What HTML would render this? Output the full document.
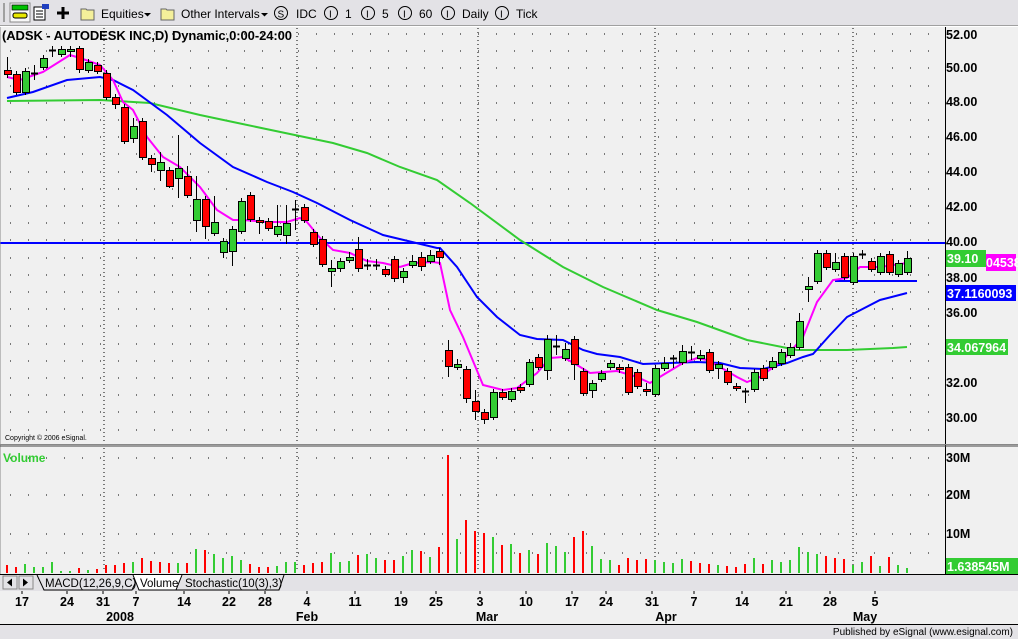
<!DOCTYPE html>
<html><head><meta charset="utf-8"><style>
body{margin:0;width:1018px;height:639px;overflow:hidden;background:#f0f0f0;font-family:"Liberation Sans",sans-serif;}
svg{position:absolute;left:0;top:0}
</style></head><body>
<svg id="s" width="1018" height="639" xmlns="http://www.w3.org/2000/svg" font-family="Liberation Sans, sans-serif">
<rect x="0" y="0" width="1018" height="26" fill="#e3e2e6"/>
<line x1="0" y1="25.5" x2="1018" y2="25.5" stroke="#a0a0a0"/>
<line x1="0" y1="26.5" x2="1018" y2="26.5" stroke="#fff"/>
<rect x="3" y="3" width="2" height="19" fill="#a0a0a0"/>
<rect x="10" y="3" width="20" height="19" fill="#f8f8f8" stroke="#888"/>
<rect x="12" y="5" width="16" height="5" fill="#00c000" stroke="#000" stroke-width=".7"/>
<rect x="13" y="13" width="14" height="5" rx="2" fill="#e8e800" stroke="#000"/>
<rect x="34" y="7" width="11" height="13" fill="#fff" stroke="#000"/>
<rect x="42" y="4" width="7" height="5" fill="#2040c0"/>
<line x1="36" y1="11" x2="43" y2="11" stroke="#000"/><line x1="36" y1="14" x2="43" y2="14" stroke="#000"/><line x1="36" y1="17" x2="43" y2="17" stroke="#000"/>
<path d="M63 7v12M57 13h12" stroke="#000" stroke-width="3"/>
<g font-size="12" fill="#000">
<path d="M81 9h5l1 1h7v10h-13z" fill="#f4f09a" stroke="#666"/>
<text x="101" y="18">Equities</text><path d="M144 13h7l-3.5 3.5z"/>
<path d="M161 9h5l1 1h7v10h-13z" fill="#f4f09a" stroke="#666"/>
<text x="181" y="18">Other Intervals</text><path d="M261 13h7l-3.5 3.5z"/>
<circle cx="281" cy="13" r="6.5" fill="none" stroke="#000"/><text x="277.5" y="17.5" font-size="10">S</text><text x="296" y="18">IDC</text>
<circle cx="331" cy="13" r="6.5" fill="none" stroke="#000"/><text x="329" y="17.5" font-size="10">I</text><text x="345" y="18">1</text>
<circle cx="368" cy="13" r="6.5" fill="none" stroke="#000"/><text x="366" y="17.5" font-size="10">I</text><text x="382" y="18">5</text>
<circle cx="405" cy="13" r="6.5" fill="none" stroke="#000"/><text x="403" y="17.5" font-size="10">I</text><text x="419" y="18">60</text>
<circle cx="448" cy="13" r="6.5" fill="none" stroke="#000"/><text x="446" y="17.5" font-size="10">I</text><text x="462" y="18">Daily</text>
<circle cx="502" cy="13" r="6.5" fill="none" stroke="#000"/><text x="500" y="17.5" font-size="10">I</text><text x="516" y="18">Tick</text>
</g>
<g id="grid"></g>
<g id="ma" fill="none" stroke-width="2"></g>
<g id="c"></g>
<g id="v"></g>
<line x1="0" y1="27" x2="0" y2="591" stroke="#888"/>
<line x1="945.5" y1="27" x2="945.5" y2="591" stroke="#000"/>
<line x1="0" y1="444.5" x2="1018" y2="444.5" stroke="#888"/>
<line x1="0" y1="446" x2="1018" y2="446" stroke="#444"/>
<text x="2" y="40" font-size="13" font-weight="bold" textLength="290">(ADSK - AUTODESK INC,D) Dynamic,0:00-24:00</text>
<text x="5" y="440" font-size="7">Copyright © 2006 eSignal.</text>
<text x="3" y="462" font-size="12" font-weight="bold" fill="#33cc33">Volume</text>
<g font-size="12.5" font-weight="bold" id="ax"></g>
<rect x="946" y="250" width="40" height="17" fill="#33cc33"/>
<rect x="986" y="254" width="30" height="17" fill="#ff00ff"/>
<text x="986" y="267" font-size="12.5" font-weight="bold" fill="#fff">04538</text>
<text x="947" y="263" font-size="12.5" font-weight="bold" fill="#fff">39.10</text>
<rect x="946" y="285" width="70" height="16" fill="#0000ff"/>
<text x="947" y="298" font-size="12.5" font-weight="bold" fill="#fff">37.1160093</text>
<rect x="946" y="339" width="62" height="16" fill="#33cc33"/>
<text x="947" y="352" font-size="12.5" font-weight="bold" fill="#fff">34.067964</text>
<rect x="946" y="558" width="72" height="16" fill="#33cc33"/>
<text x="947" y="571" font-size="12.5" font-weight="bold" fill="#fff">1.638545M</text>
<rect x="0" y="574" width="1018" height="17" fill="#e3e2e6"/>
<line x1="0" y1="574.5" x2="1018" y2="574.5" stroke="#000"/>
<rect x="3" y="576" width="14" height="13" fill="#e3e2e6" stroke="#888"/><path d="M7 582.5l5-4v8z"/>
<rect x="19" y="576" width="14" height="13" fill="#e3e2e6" stroke="#888"/><path d="M28 582.5l-5-4v8z"/>
<path d="M37 575l7 15h88l7-15" fill="#e3e2e6" stroke="#000"/>
<path d="M133 575l6 15h42l4-15" fill="#fff" stroke="#000"/>
<path d="M182 575l-6 15h103l5-15" fill="#e3e2e6" stroke="#000"/>
<g font-size="11.5"><text x="45" y="587">MACD(12,26,9,C)</text><text x="140" y="587">Volume</text><text x="185" y="587">Stochastic(10(3),3)</text></g>
<line x1="0" y1="624.5" x2="1018" y2="624.5" stroke="#000"/>
<rect x="0" y="625" width="1018" height="14" fill="#e3e2e6"/>
<text x="1013" y="635" font-size="10" text-anchor="end">Published by eSignal (www.esignal.com)</text>
<g font-size="12.5" font-weight="bold" text-anchor="middle" id="dt"></g>
</svg>
<script>
var NS="http://www.w3.org/2000/svg";
function el(p,t,a,txt){var e=document.createElementNS(NS,t);for(var k in a)e.setAttribute(k,a[k]);if(txt)e.textContent=txt;document.getElementById(p).appendChild(e);return e;}
var gl={34:52,67:50,101:48,136:46,171:44,206:42,241:40,277:38,312:36,347:34,382:32,417:30};
var s="";
for(var p=52;p>=29;p--){var y=34+(52-p)*17.2;for(var x=10;x<940;x+=18)s+="M"+x+" "+y.toFixed(0)+"h1";}
[458,495,534,553].forEach(function(y){for(var x=10;x<940;x+=18)s+="M"+x+" "+y+"h1";});
[104,297,478,655,853].forEach(function(x){for(var y=28;y<572;y+=4)s+="M"+x+" "+y+"v1";});
el("grid","path",{d:s,stroke:"#000","stroke-width":1});
for(var k in gl)el("ax","text",{x:946,y:+k+5},gl[k].toFixed(2));
[["30M",462],["20M",499],["10M",538]].forEach(function(a){el("ax","text",{x:946,y:a[1]},a[0]);});
function pl(pts,c,w){el("ma","polyline",{points:pts,stroke:c,"stroke-width":w||2});}
pl("0,243 945,243","#0000ff",2);
pl("835,281 917,281","#0000ff",2);
pl("7,101 100,100 150,103 200,115 233,122 290,134 333,143 367,153 400,167 437,180 470,203 520,240 563,267 603,287 657,310 697,322 747,340 797,350 847,350 893,348 907,347","#33cc33");
pl("7,98 33,92 67,80 100,77 113,80 133,90 167,115 200,143 233,167 267,182 293,192 317,203 350,220 383,235 437,248 440,248 457,267 477,297 497,317 520,335 537,339 563,340 583,350 597,354 620,357 643,364 697,362 720,363 740,368 763,369 787,363 803,357 813,354 830,335 847,317 880,300 907,293","#0000ff");
pl("7,77 20,80 43,72 70,55 80,58 100,65 113,80 123,102 133,110 147,137 163,157 180,167 200,187 217,210 233,220 243,220 267,222 287,222 300,218 307,222 320,238 333,250 350,253 367,261 383,263 400,267 413,263 433,262 440,263 450,310 463,337 483,385 503,390 517,388 537,373 550,358 563,357 577,365 590,373 617,371 637,377 650,383 663,375 683,363 697,358 707,360 720,367 737,377 747,382 760,377 783,360 803,337 817,302 833,280 847,278 860,267 880,267 907,263","#ff00ff");
var C=[[70,74,"r",57,78],[74,92,"r",71,95],[71,92,"g",68,95],[73,73,"x",65,80],[58,67,"g",55,70],[50,50,"x",46,57],[49,54,"g",46,57],[49,51,"g",46,57],[48,69,"r",46,73],[62,70,"g",59,73],[65,71,"r",62,74],[73,97,"r",70,100],[97,104,"r",94,109],[107,141,"r",104,144],[126,138,"g",118,143],[121,157,"r",118,160],[158,164,"r",155,172],[162,170,"g",152,181],[170,186,"r",167,188],[168,178,"g",135,198],[176,195,"r",166,198],[199,220,"g",176,232],[199,226,"r",196,239],[222,233,"g",196,236],[241,252,"g",238,258],[229,251,"g",226,266],[201,231,"g",198,234],[195,219,"r",192,222],[220,222,"r",217,234],[221,228,"r",218,231],[226,234,"g",205,237],[223,235,"g",205,244],[209,209,"x",200,230],[207,220,"r",204,223],[232,244,"r",229,247],[239,264,"r",236,267],[268,271,"g",260,287],[261,268,"g",258,272],[257,260,"g",252,263],[249,268,"r",237,272],[265,265,"x",259,270],[265,265,"x",259,270],[269,274,"r",266,277],[259,278,"r",256,282],[271,277,"g",268,283],[261,265,"g",255,268],[257,266,"r",252,271],[255,261,"g",250,264],[251,257,"r",248,265],
[350,366,"r",340,377],[364,367,"g",359,370],[369,398,"r",366,403],[401,411,"r",390,420],[412,419,"r",409,424],[392,417,"g",389,420],[392,397,"r",389,400],[391,399,"g",388,402],[387,390,"r",384,393],[362,384,"g",359,387],[357,367,"r",354,370],[339,370,"g",335,380],[346,346,"x",335,355],[349,358,"g",343,361],[339,364,"r",336,380],[371,393,"r",368,396],[383,390,"g",380,398],[373,379,"g",370,382],[363,367,"g",360,370],[367,369,"r",364,373],[367,392,"r",364,395],[372,386,"r",369,389],[389,391,"r",383,396],[368,394,"g",365,397],[363,368,"g",357,371],[358,358,"x",355,368],[351,362,"g",345,365],[352,352,"x",346,360],[355,358,"g",350,361],[352,370,"r",349,373],[364,368,"g",361,379],[371,382,"r",368,385],[386,388,"r",383,391],[391,391,"x",388,403],[372,389,"g",369,392],[368,378,"r",365,381],[361,367,"g",357,370],[352,363,"g",349,366],[347,355,"g",343,358],[321,347,"g",313,350],[286,289,"g",277,302],[253,281,"g",250,284],[253,267,"r",250,270],[262,269,"g",253,272],[256,277,"r",253,280],[256,282,"g",253,285],[254,254,"x",250,259],[261,269,"r",258,272],[256,272,"g",253,275],[254,272,"r",251,275],[263,274,"g",260,277],[258,272,"g",251,275]];
var V=[[8,"r"],[6,"r"],[9,"g"],[6,"g"],[6,"g"],[11,"g"],[2,"g"],[2,"g"],[5,"r"],[3,"g"],[4,"r"],[8,"r"],[8,"r"],[10,"r"],[11,"g"],[15,"r"],[12,"r"],[11,"r"],[10,"r"],[10,"g"],[10,"r"],[24,"g"],[23,"r"],[19,"g"],[15,"g"],[17,"g"],[13,"g"],[9,"r"],[6,"r"],[6,"r"],[7,"g"],[11,"g"],[11,"g"],[8,"r"],[10,"r"],[11,"r"],[20,"g"],[11,"g"],[12,"g"],[18,"r"],[19,"g"],[15,"g"],[13,"r"],[13,"r"],[17,"g"],[23,"g"],[22,"r"],[16,"g"],[26,"r"],[118,"r"],[34,"g"],[53,"r"],[42,"r"],[40,"r"],[36,"g"],[28,"r"],[29,"g"],[20,"r"],[23,"g"],[19,"r"],[30,"g"],[27,"g"],[21,"g"],[36,"r"],[42,"r"],[27,"g"],[14,"g"],[13,"g"],[8,"r"],[15,"r"],[13,"r"],[14,"r"],[13,"g"],[11,"g"],[10,"g"],[14,"g"],[12,"r"],[10,"r"],[9,"r"],[8,"g"],[7,"r"],[6,"r"],[9,"r"],[15,"g"],[9,"r"],[13,"g"],[11,"g"],[13,"g"],[26,"g"],[21,"g"],[19,"g"],[17,"r"],[15,"r"],[14,"r"],[8,"g"],[11,"g"],[17,"r"],[7,"g"],[16,"r"],[8,"g"],[5,"g"]];
var col={r:"#ff0000",g:"#33cc33"};
C.forEach(function(c,i){var x=7+i*9;
 el("c","line",{x1:x+.5,y1:c[3],x2:x+.5,y2:c[4],stroke:"#000"});
 if(c[2]=="x")el("c","line",{x1:x-3,y1:c[0]+.5,x2:x+4,y2:c[0]+.5,stroke:"#000","stroke-width":2});
 else el("c","rect",{x:x-3+.5,y:c[0]+.5,width:7,height:Math.max(c[1]-c[0],2),fill:col[c[2]],stroke:"#000"});
});
V.forEach(function(v,i){var x=7+i*9;el("v","rect",{x:x-1,y:573-v[0],width:2,height:v[0],fill:col[v[1]]});});
[["17",22],["24",67],["31",103],["7",136],["14",184],["22",229],["28",265],["4",307],["11",355],["19",401],["25",436],["3",480],["10",526],["17",572],["24",606],["31",652],["7",694],["14",742],["21",786],["28",830],["5",875]].forEach(function(a){el("dt","text",{x:a[1],y:606},a[0]);el("dt","line",{x1:a[1],y1:591,x2:a[1],y2:594,stroke:"#000"});});
[["2008",120],["Feb",307],["Mar",487],["Apr",666],["May",865]].forEach(function(a){el("dt","text",{x:a[1],y:621},a[0]);});
</script>
</body></html>
